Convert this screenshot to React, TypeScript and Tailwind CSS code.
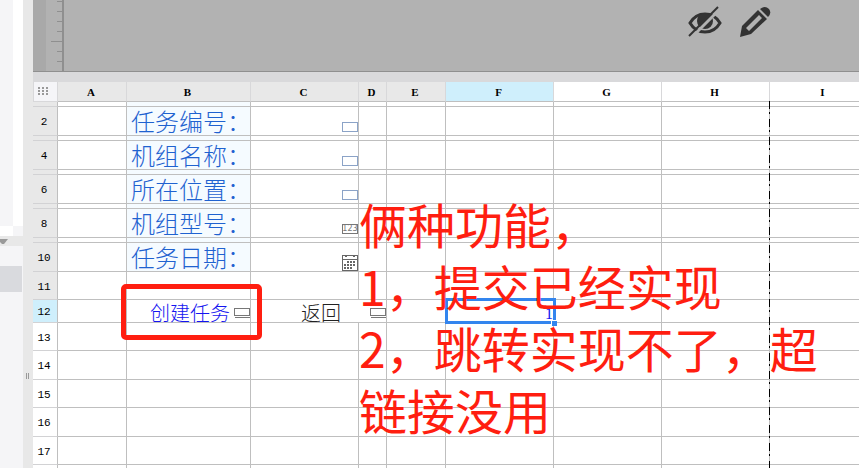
import React from "react";

type Widget = "text" | "number" | "date" | "button";

const columns = [
  { name: "A", width: "w-[69px]", used: true },
  { name: "B", width: "w-[124px]", used: true },
  { name: "C", width: "w-[108px]", used: true },
  { name: "D", width: "w-[28px]", used: true },
  { name: "E", width: "w-[59px]", used: true },
  { name: "F", width: "w-[108px]", used: false },
  { name: "G", width: "w-[108px]", used: false },
  { name: "H", width: "w-[108px]", used: false },
  { name: "I", width: "w-[108px]", used: false },
];

const rows: { n: number; height: string; label?: string; widget?: Widget }[] = [
  { n: 1, height: "h-[5px]" },
  { n: 2, height: "h-[29px]", label: "任务编号：", widget: "text" },
  { n: 3, height: "h-[5px]" },
  { n: 4, height: "h-[29px]", label: "机组名称：", widget: "text" },
  { n: 5, height: "h-[5px]" },
  { n: 6, height: "h-[29px]", label: "所在位置：", widget: "text" },
  { n: 7, height: "h-[5px]" },
  { n: 8, height: "h-[29px]", label: "机组型号：", widget: "number" },
  { n: 9, height: "h-[5px]" },
  { n: 10, height: "h-[29px]", label: "任务日期：", widget: "date" },
  { n: 11, height: "h-[28px]" },
  { n: 12, height: "h-[23px]" },
  { n: 13, height: "h-[28px]" },
  { n: 14, height: "h-[29px]" },
  { n: 15, height: "h-[28px]" },
  { n: 16, height: "h-[29px]" },
  { n: 17, height: "h-[28px]" },
  { n: 18, height: "h-[29px]" },
];

function WidgetMark({ kind }: { kind: Widget }) {
  if (kind === "text") {
    return (
      <svg className="block h-[10px] w-[16px]" viewBox="0 0 16 10" shapeRendering="crispEdges">
        <rect x="0.5" y="0.5" width="15" height="9" fill="#fff" stroke="#8ba3c7" />
      </svg>
    );
  }
  if (kind === "number") {
    return (
      <span className="flex h-[10px] w-[16px] items-center justify-center border border-[#777] bg-white font-['DejaVu_Sans',sans-serif] text-[8px] leading-[8px] text-[#777]">
        123
      </span>
    );
  }
  if (kind === "date") {
    return (
      <svg className="block h-[16px] w-[16px]" viewBox="0 0 16 16" shapeRendering="crispEdges">
        <rect x="0.5" y="0.5" width="15" height="15" fill="#fff" stroke="#666" />
        <path d="M0 4.5H16M3 1.5H5M11 1.5H13" stroke="#666" />
        <path
          d="M5 6h2v2h-2zM8 6h2v2h-2zM11 6h2v2h-2zM2 9h2v2h-2zM5 9h2v2h-2zM8 9h2v2h-2zM11 9h2v2h-2zM2 12h2v2h-2zM5 12h2v2h-2zM8 12h2v2h-2z"
          fill="#666"
        />
      </svg>
    );
  }
  return (
    <svg className="block h-[10px] w-[16px]" viewBox="0 0 16 10" shapeRendering="crispEdges">
      <rect x="0.5" y="0.5" width="15" height="7" fill="#fff" stroke="#777" />
      <path d="M1 9.5H16" stroke="#777" />
    </svg>
  );
}

function rowHeaderColor(n: number) {
  if (n === 12) return "bg-[#cfeffc]";
  return n < 12 ? "bg-[#e8e8e8]" : "bg-white";
}

function cellBorder(name: string) {
  return name === "H" ? "border-b border-[#bfbfbf]" : "border-r border-b border-[#bfbfbf]";
}

function Cell({ name, row }: { name: string; row: (typeof rows)[number] }) {
  if (row.n === 12 && name === "B") {
    return (
      <td className={cellBorder(name)}>
        <div className="flex h-[22px] items-center justify-end gap-[4px] pt-[4px]">
          <button className="text-[20px] leading-[18px] font-light whitespace-nowrap text-[#1414f0]">创建任务</button>
          <WidgetMark kind="button" />
        </div>
      </td>
    );
  }
  if (row.n === 12 && name === "C") {
    return (
      <td colSpan={2} className={cellBorder(name)}>
        <div className="flex h-[22px] items-center justify-end gap-[29px] pt-[4px]">
          <button className="text-[20px] leading-[18px] font-light whitespace-nowrap text-[#222]">返回</button>
          <WidgetMark kind="button" />
        </div>
      </td>
    );
  }
  if (row.n === 12 && name === "F") {
    return (
      <td className={cellBorder(name)}>
        <div className="relative h-[22px] text-right font-['Liberation_Serif',serif] text-[16px] leading-[28px] text-[#1414f0]">
          1
          <div className="absolute -top-[2px] -left-px h-[26px] w-[111px] border-3 border-[#3385ee]" />
          <div className="absolute -right-[4px] -bottom-[4px] size-[6px] border-t border-l border-white bg-[#3385ee]" />
        </div>
      </td>
    );
  }
  if (name === "B" && row.n < 11) {
    return (
      <td className={`${cellBorder(name)} bg-[#f5fbff]`}>
        {row.label && (
          <div className="h-[28px] pl-[4px] text-[24px] leading-[28px] font-light whitespace-nowrap text-[#1f62d0]">{row.label}</div>
        )}
      </td>
    );
  }
  if (name === "C" && row.widget) {
    return (
      <td className={cellBorder(name)}>
        <div className={`flex h-[28px] items-end justify-end ${row.widget === "date" ? "" : "pb-[3px]"}`}>
          <WidgetMark kind={row.widget} />
        </div>
      </td>
    );
  }
  return <td className={cellBorder(name)} />;
}

function Sheet() {
  return (
    <div className="relative min-h-0 flex-1 overflow-hidden">
      <table className="w-[845px] table-fixed border-separate border-spacing-0 font-['Noto_Sans_CJK_SC',sans-serif] text-[0px]">
        <thead className="font-['Liberation_Serif',serif] text-[11px] leading-[17px] text-black">
          <tr className="h-[20px]">
            <th className="w-[25px] border border-t-0 border-[#d8d8da] bg-[#f5f5f8] p-0">
              <svg className="ml-[4px] block h-[9px] w-[11px]" viewBox="0 0 11 9" shapeRendering="crispEdges" fill="#999">
                {[0, 4, 8].map((x) => [0, 3, 6].map((y) => <rect key={`${x}-${y}`} x={x} y={y} width="2" height="2" />))}
              </svg>
            </th>
            {columns.map((c) => (
              <th
                key={c.name}
                className={`${c.width} border-r border-b border-r-[#d8d8da] border-b-[#bfbfbf] pt-[2px] pr-[2px] pb-0 pl-0 font-bold ${
                  c.name === "F" ? "bg-[#cfeffc]" : c.used ? "bg-[#e8e8e8]" : "bg-white"
                }`}
              >
                {c.name}
              </th>
            ))}
          </tr>
        </thead>
        <tbody>
          {rows.map((row) => (
            <tr key={row.n} className={row.height}>
              <th
                className={`border-r border-b border-r-[#bfbfbf] border-b-[#d2d2d4] p-0 font-['Liberation_Mono',monospace] text-[11px] font-normal text-black ${rowHeaderColor(row.n)}`}
              >
                {row.height !== "h-[5px]" && row.n < 18 ? <div className="pt-[2px] pr-[2px] leading-[14px]">{row.n}</div> : null}
              </th>
              {columns.map((c) => (row.n === 12 && c.name === "D" ? null : <Cell key={c.name} name={c.name} row={row} />))}
            </tr>
          ))}
        </tbody>
      </table>

      {/* page break marker along the right side of column H */}
      <svg className="absolute top-[19px] left-[736px] h-full w-px" shapeRendering="crispEdges">
        <path d="M0.5 0V900" stroke="#bfbfbf" />
        <path d="M0.5 0V900" stroke="#000" strokeDasharray="8 3 2 5" />
      </svg>
      <div className="absolute top-[202px] left-[88px] h-[56px] w-[141px] rounded-[5px] border-5 border-[#ff1e10]" />
      <p className="absolute top-[110px] left-[326px] w-[470px] font-['Noto_Sans_CJK_SC',sans-serif] text-[48px] leading-[62px] whitespace-nowrap text-[#ff1e10]">
        俩种功能，
        <br />
        1，提交已经实现
        <br />
        2，跳转实现不了，超
        <br />
        链接没用
      </p>
    </div>
  );
}

function Preview() {
  return (
    <div className="flex h-[72px] shrink-0 border-b border-[#8f8f8f] bg-[#b2b2b2]">
      <div className="w-[13px] bg-[#a9a9a9]" />
      <svg className="h-full w-[16px]" viewBox="0 0 16 71" shapeRendering="crispEdges" stroke="#8f8f8f">
        <path d="M11 1.5H16M11 11.5H16M11 21.5H16M11 31.5H16M5 41.5H16M11 51.5H16M11 61.5H16" />
      </svg>
      <div className="flex flex-1 items-start justify-end gap-[18px] border-l-2 border-[#8f8f8f] pt-[6px] pr-[88px]">
        <button aria-label="隐藏">
          <svg className="block h-[32px] w-[34px]" viewBox="0 0 34 32" fill="none" stroke="#333">
            <path d="M2 17C9 5 25 5 32 17C25 29 9 29 2 17Z" strokeWidth="3" />
            <circle cx="17" cy="15" r="8" fill="#333" stroke="none" />
            <path d="M4 31L33 2" stroke="#b2b2b2" strokeWidth="3" />
            <path d="M1 30L30 1" strokeWidth="2" />
          </svg>
        </button>
        <button aria-label="编辑">
          <svg className="block h-[32px] w-[31px]" viewBox="0 0 31 32" fill="#333">
            <path fillRule="evenodd" d="M0 31L2 20L18 4L27 13L11 28ZM6 22L9 25L22 12L19 9Z" />
            <path d="M20 3Q25 -1 29 3Q32 7 28 11Z" />
          </svg>
        </button>
      </div>
    </div>
  );
}

function SidePanel() {
  return (
    <aside className="flex w-[23px] shrink-0 flex-col bg-[#f5f5f7]">
      <div className="flex h-[226px] justify-end">
        <div className="w-[10px] bg-white" />
      </div>
      <div className="h-[10px] w-[13px] bg-white" />
      <div className="h-[10px] bg-[#e8e8e8]">
        <svg className="block h-[10px] w-[8px]" viewBox="0 0 8 10" fill="#999">
          <path d="M0 3H8L4 8H2L0 6Z" />
        </svg>
      </div>
      <div className="mt-[20px] mr-px h-[26px] bg-[#d9dade]" />
    </aside>
  );
}

export default function App() {
  return (
    <div className="flex h-screen overflow-hidden bg-white">
      <SidePanel />
      <div className="flex w-[10px] shrink-0 items-center bg-[#e8e8e8] pt-[284px]">
        <div className="ml-[3px] h-[6px] w-[3px] border-x border-[#999]" />
      </div>
      <main className="flex min-w-0 flex-1 flex-col">
        <Preview />
        <div className="h-[10px] shrink-0 bg-[#d9d9db]" />
        <Sheet />
      </main>
    </div>
  );
}
